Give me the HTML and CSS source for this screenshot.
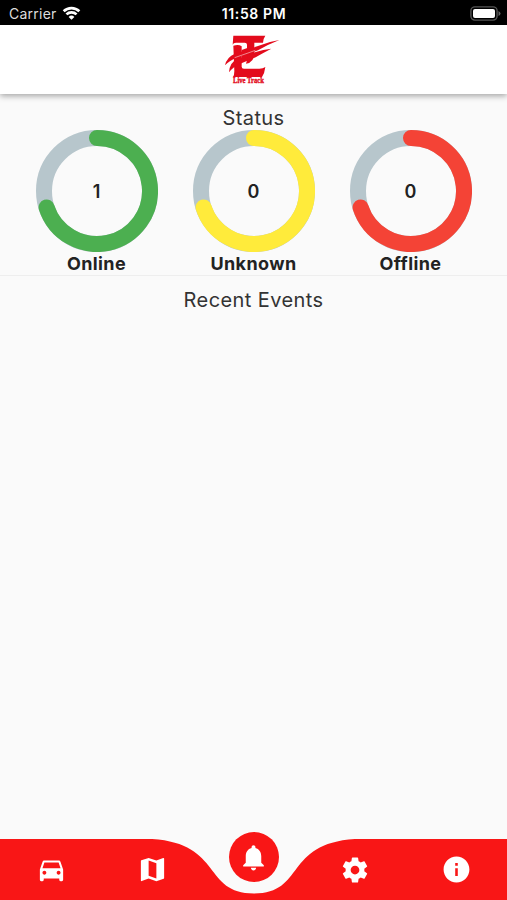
FILE: index.html
```html
<!DOCTYPE html>
<html lang="en">
<head>
<meta charset="utf-8">
<title>Live Track</title>
<link rel="stylesheet" href="styles.css">
</head>
<body>
<div class="statusbar">
  <div class="carrier"><span>Carrier</span>
    <svg width="19" height="14" viewBox="0 0 20 15" fill="none" stroke="#fff" stroke-width="2.9"><path d="M1.6 5.600a12 12 0 0 1 16.800 0M4.600 9a7.700 7.700 0 0 1 10.800 0"/><path d="M10 14.800 6.900 11.700a4.400 4.400 0 0 1 6.200 0z" fill="#fff" stroke="none"/></svg>
  </div>
  <div class="clock">11:58 PM</div>
  <div class="battery"><svg width="31" height="15" viewBox="0 0 31 15"><rect x=".9" y=".9" width="26.2" height="13.2" rx="4" fill="none" stroke="#555" stroke-width="1.4"/><rect x="3" y="3" width="22" height="9" rx="2" fill="#fff"/><path d="M28.5 5q2 1 2 2.500t-2 2.500z" fill="#666"/></svg></div>
</div>
<header class="appbar">
  <svg class="logo" width="60" height="54" viewBox="60 93 180 162" fill="#e30b1c">
    <path d="M100 107H196Q190 115 189 128H163V160Q163 188 138 191Q141 184 141 174V134Q141 128 134 128H108Q100 128 98 134Z"/>
    <path d="M100 137Q116 132 125 139V200Q125 206 132 206H178Q189 206 196 201Q194 219 186 231H99Q103 225 103 214Z"/>
    <path d="M238 120Q205 125 174 138L105 161Q80 171 75 196Q89 181 110 174L174 151Q207 132 238 120Z"/>
    <path d="M214 146Q190 148 165 157L112 177Q89 187 87 217Q98 202 119 192L167 172Q194 156 214 146Z"/>
    <path d="M125 150L142 144V178L125 184Z"/>
    <path d="M104 173L144 159L166 151" fill="none" stroke="#fff" stroke-width="1.500"/>
    <text transform="translate(99 250) scale(1 1.300)" x="0" y="0" textLength="93" lengthAdjust="spacingAndGlyphs">Live Track</text>
  </svg>
</header>
<main>
  <section class="status">
    <h2>Status</h2>
    <div class="rings">
      <div class="item"><div class="ring green"><svg viewBox="0 0 122 122"><circle class="track" cx="61" cy="61" r="53"/><path d="M61 8A53 53 0 1 1 10.600 77.400"/></svg><b>1</b></div><strong>Online</strong></div>
      <div class="item"><div class="ring yellow"><svg viewBox="0 0 122 122"><circle class="track" cx="61" cy="61" r="53"/><path d="M61 8A53 53 0 1 1 10.600 77.400"/></svg><b>0</b></div><strong>Unknown</strong></div>
      <div class="item"><div class="ring red"><svg viewBox="0 0 122 122"><circle class="track" cx="61" cy="61" r="53"/><path d="M61 8A53 53 0 1 1 10.600 77.400"/></svg><b>0</b></div><strong>Offline</strong></div>
    </div>
  </section>
  <section class="events"><h2>Recent Events</h2></section>
</main>
<nav class="tabs">
  <svg class="wave" width="507" height="61" viewBox="0 0 507 61"><path fill="#f91616" d="M0 0H152.1C223.1 4.600 202.800 54.500 254 54.500S283.900 4.600 354.900 0H507V61H0Z"/></svg>
  <a><svg viewBox="0 0 24 24"><path d="M18.92 6.01C18.72 5.42 18.16 5 17.5 5h-11c-.66 0-1.21.42-1.42 1.01L3 12v8c0 .55.45 1 1 1h1c.55 0 1-.45 1-1v-1h12v1c0 .55.45 1 1 1h1c.55 0 1-.45 1-1v-8l-2.080-5.990zM6.500 16c-.83 0-1.500-.67-1.500-1.500S5.670 13 6.500 13s1.500.67 1.500 1.500S7.330 16 6.500 16zm11 0c-.83 0-1.500-.67-1.500-1.500s.67-1.500 1.500-1.500 1.500.67 1.500 1.500-.67 1.500-1.500 1.500zM5 11l1.500-4.500h11L19 11H5z"/></svg></a>
  <a><svg viewBox="0 0 24 24"><path d="M20.500 3l-.16.03L15 5.100 9 3 3.360 4.900c-.21.07-.36.25-.36.48V20.500c0 .28.22.5.5.5l.16-.03L9 18.900l6 2.100 5.640-1.900c.21-.07.36-.25.36-.48V3.500c0-.28-.22-.5-.5-.5zM15 19l-6-2.110V5l6 2.110V19z"/></svg></a>
  <a class="active"><span><svg viewBox="0 0 24 24"><path d="M12 22c1.100 0 2-.9 2-2h-4c0 1.100.89 2 2 2zm6-6v-5c0-3.070-1.640-5.640-4.500-6.320V4c0-.83-.67-1.500-1.500-1.500s-1.500.67-1.500 1.500v.68C7.630 5.360 6 7.920 6 11v5l-2 2v1h16v-1l-2-2z"/></svg></span></a>
  <a class="settings"><svg viewBox="0 0 24 24"><path d="M19.430 12.980c.04-.32.07-.64.07-.98s-.03-.66-.07-.98l2.110-1.650c.19-.15.24-.42.12-.64l-2-3.460c-.12-.22-.39-.3-.61-.22l-2.490 1c-.52-.4-1.080-.73-1.690-.98l-.38-2.650C14.460 2.180 14.250 2 14 2h-4c-.25 0-.46.18-.49.42l-.38 2.650c-.61.25-1.170.59-1.690.98l-2.490-1c-.23-.09-.49 0-.61.22l-2 3.460c-.13.22-.07.49.12.64l2.110 1.650c-.04.32-.07.65-.07.98s.03.66.07.98l-2.110 1.650c-.19.15-.24.42-.12.64l2 3.460c.12.22.39.3.61.22l2.490-1c.52.4 1.080.73 1.690.98l.38 2.650c.03.24.24.42.49.42h4c.25 0 .46-.18.49-.42l.38-2.650c.61-.25 1.170-.59 1.690-.98l2.490 1c.23.09.49 0 .61-.22l2-3.460c.12-.22.07-.49-.12-.64l-2.110-1.650zM12 15.500c-1.930 0-3.500-1.570-3.500-3.500s1.570-3.500 3.500-3.500 3.500 1.570 3.500 3.500-1.570 3.500-3.500 3.500z"/></svg></a>
  <a><svg viewBox="0 0 24 24"><path d="M12 2C6.480 2 2 6.480 2 12s4.480 10 10 10 10-4.480 10-10S17.520 2 12 2zm1 15h-2v-6h2v6zm0-8h-2V7h2v2z"/></svg></a>
</nav>
</body>
</html>
```
FILE: styles.css
```css
* { box-sizing: border-box; }
body {
  margin: 0;
  height: 900px;
  display: flex;
  flex-direction: column;
  overflow: hidden;
  background: #fafafa;
  color: #222;
  font-family: Inter, "Liberation Sans", sans-serif;
}
svg { display: block; }
.statusbar {
  height: 25px;
  padding: 2px 6px 0 9px;
  display: grid;
  grid-template-columns: 1fr auto 1fr;
  align-items: center;
  background: #000;
  color: #fff;
  font-size: 14px;
}
.carrier { display: flex; align-items: center; gap: 5px; color: #ddd; letter-spacing: .25px; }
.carrier svg { margin-top: -2px; }
.clock { margin-left: -2px; font-weight: 600; letter-spacing: .6px; }
.battery { justify-self: end; }
.appbar {
  height: 69px;
  padding-top: 6px;
  display: flex;
  justify-content: center;
  background: #fff;
  box-shadow: 0 2px 6px rgba(0, 0, 0, .35);
}
.logo { margin-left: -7px; }
.logo text { font: bold 19px "Liberation Serif", serif; stroke: #e30b1c; stroke-width: .8px; }
main { flex: 1; }
h2 {
  margin: 0;
  text-align: center;
  font-size: 20px;
  line-height: 24px;
  font-weight: 400;
  letter-spacing: .4px;
  color: #333;
}
.status { height: 182px; padding-top: 12px; border-bottom: 1px solid #eee; }
.rings { display: flex; justify-content: center; gap: 35px; }
.item { width: 122px; text-align: center; }
.ring { width: 122px; height: 122px; display: grid; place-items: center; }
.ring > * { grid-area: 1 / 1; }
.ring svg { width: 122px; height: 122px; fill: none; stroke-width: 16; stroke-linecap: round; }
.ring .track { stroke: #b7c6cc; }
.ring b { font-size: 18px; font-weight: 600; }
.green path { stroke: #4caf50; }
.yellow path { stroke: #ffeb3b; }
.red path { stroke: #f44336; }
.item strong { display: block; font-size: 18px; line-height: 24px; font-weight: 650; letter-spacing: .4px; }
.events { padding-top: 12px; }
.tabs { height: 61px; display: grid; grid-template-columns: repeat(5, 1fr); position: relative; }
.wave { position: absolute; inset: 0; }
.tabs a { position: relative; display: flex; justify-content: center; padding: 15px 0 0 1px; }
.tabs a svg { width: 31px; height: 31px; fill: #fff; }
.tabs .settings { padding: 16px 0 0; }
.tabs .settings svg { width: 30px; height: 30px; }
.tabs .active { padding: 0 0 0 1px; }
.active span {
  width: 50px;
  height: 50px;
  margin-top: -7px;
  display: grid;
  place-items: center;
  border-radius: 50%;
  background: #f91616;
}
```
